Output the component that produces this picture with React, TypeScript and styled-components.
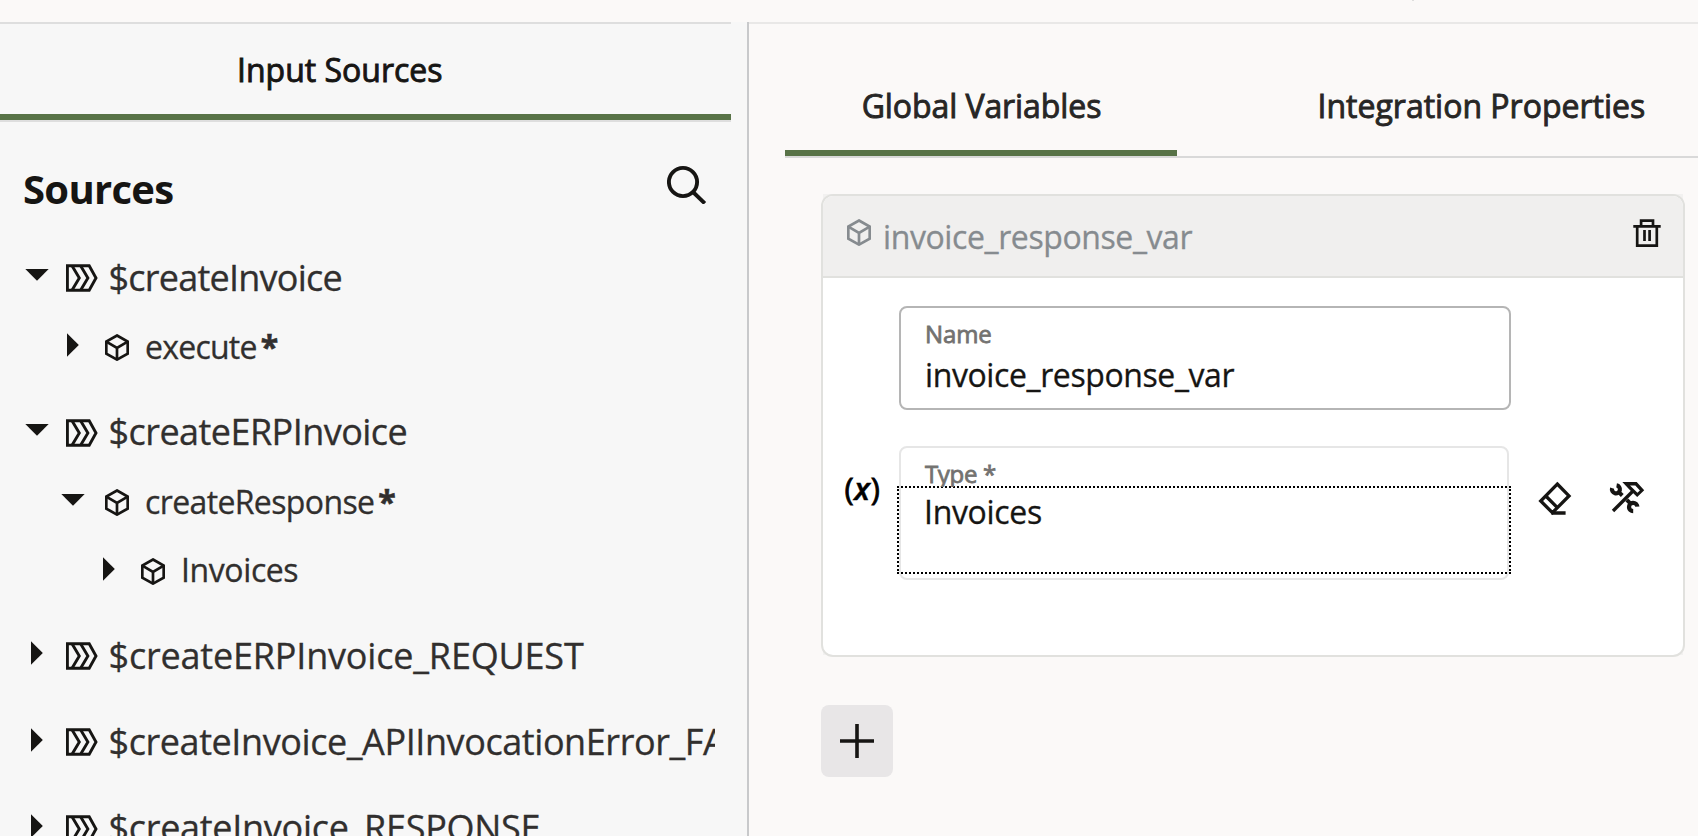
import React from "react";
import styled, { createGlobalStyle } from "styled-components";

const GlobalStyle = createGlobalStyle`
  *, *::before, *::after { box-sizing: border-box; }
  html, body { margin: 0; padding: 0; }
  body {
    background: #fbf9f8;
    color: #161513;
    font-family: "Open Sans", "Noto Sans", sans-serif;
    overflow: hidden;
  }
  svg { display: block; flex: none; }
`;

const Page = styled.div`
  display: flex;
  flex-direction: column;
  width: 100vw;
  height: 836px;
  overflow: hidden;
`;

const TopStrip = styled.div`
  flex: none;
  height: 22px;
  padding-left: 1412px;
`;

const TopTick = styled.div`
  width: 2px;
  height: 1px;
  background: #dededd;
`;

const Workspace = styled.main`
  flex: 1;
  display: flex;
  min-height: 0;
`;

const SourcesPanel = styled.aside`
  flex: none;
  width: 749px;
  padding-right: 16px;
  background: #f7f7f7;
  border-right: 2px solid #c8c9cb;
  overflow: hidden;
`;

const SourcesTabBar = styled.div`
  height: 100px;
  border-top: 2px solid #dedede;
  border-bottom: 2px solid #dedede;
`;

const TabText = styled.span<{ $tone?: string; $spacing?: number }>`
  font-size: 32px;
  line-height: 92px;
  white-space: nowrap;
  color: ${(p) => p.$tone ?? "#161513"};
  -webkit-text-stroke: 0.9px ${(p) => p.$tone ?? "#161513"};
  letter-spacing: ${(p) => p.$spacing ?? 0}px;
`;

const SourcesTab = styled.div`
  height: 96px;
  padding-left: 237px;
  border-bottom: 6px solid #587347;
  overflow: hidden;
`;

const SourcesHeader = styled.div`
  display: flex;
  justify-content: space-between;
  align-items: flex-start;
  height: 120px;
  padding: 38px 24px 0 23px;
`;

const SourcesTitle = styled.h2`
  margin: 0;
  font-size: 40px;
  line-height: 57px;
  font-weight: 700;
  letter-spacing: -0.7px;
`;

const SearchIconBox = styled.div`
  padding-top: 4px;
`;

const Tree = styled.div`
  width: 715px;
  overflow: hidden;
`;

const TreeGroup = styled.div`
  margin-bottom: 16.3px;
`;

const TreeRow = styled.div<{ $level: number }>`
  display: flex;
  align-items: center;
  height: ${(p) => (p.$level === 0 ? 70 : 68.5)}px;
  padding-left: ${(p) => 25 + p.$level * 36}px;
`;

const Caret = styled.span<{ $root: boolean }>`
  flex: none;
  display: flex;
  justify-content: center;
  width: 24px;
  margin-right: ${(p) => (p.$root ? 17 : 20)}px;
  padding-bottom: ${(p) => (p.$root ? 3.5 : 2)}px;
`;

const NodeIcon = styled.span<{ $root: boolean }>`
  flex: none;
  margin-right: ${(p) => (p.$root ? 10.5 : 16)}px;
  padding-top: ${(p) => (p.$root ? 2 : 3)}px;
`;

const NodeLabel = styled.span<{ $root: boolean; $spacing: number }>`
  padding-top: 1px;
  font-size: ${(p) => (p.$root ? 36 : 32)}px;
  line-height: 60px;
  letter-spacing: ${(p) => p.$spacing}px;
  color: #312f2e;
  -webkit-text-stroke: 0.3px #312f2e;
  white-space: nowrap;
`;

const Required = styled.span`
  margin-left: 4px;
  padding-top: 1px;
  font-size: 32px;
  line-height: 60px;
  font-weight: 700;
  color: #312f2e;
  -webkit-text-stroke: 0.6px #312f2e;
`;

const MappingPanel = styled.section`
  flex: 1;
  min-width: 0;
  border-top: 2px solid #e9e8e7;
  overflow: hidden;
`;

const TabList = styled.div`
  display: flex;
  height: 134px;
  margin-left: 36px;
  padding-top: 36px;
  border-bottom: 2px solid #d9d9d9;
`;

const Tab = styled.div<{ $active?: boolean }>`
  flex: none;
  width: ${(p) => (p.$active ? "392px" : "521px")};
  padding-left: ${(p) => (p.$active ? 1 : 140.5)}px;
  text-align: ${(p) => (p.$active ? "center" : "left")};
  border-bottom: 6px solid ${(p) => (p.$active ? "#587347" : "transparent")};
  overflow: hidden;
`;

const Content = styled.div`
  padding: 36px 0 0 72px;
`;

const CardBacking = styled.div`
  width: 864px;
  height: 463px;
  padding: 0 2px 2px;
  background: linear-gradient(#f2f1f0, #f2f1f0) content-box;
`;

const Card = styled.div`
  width: 864px;
  height: 463px;
  margin-left: -2px;
  background: #fff;
  border: 2px solid #e1e1de;
  border-radius: 12px;
  overflow: hidden;
`;

const CardHeader = styled.header`
  display: flex;
  align-items: flex-start;
  height: 82px;
  padding: 23px 22px 0 24px;
  background: #f0efee;
  border-bottom: 2px solid #e1e1de;
  color: #868b8f;
`;

const CardTitle = styled.span`
  flex: 1;
  margin: -6px 0 0 12px;
  font-size: 32px;
  line-height: 48px;
  letter-spacing: -0.4px;
  -webkit-text-stroke: 0.3px #868b8f;
`;

const CardBody = styled.div`
  display: grid;
  grid-template-columns: 76px 612px auto;
  row-gap: 36px;
  padding-top: 28px;
`;

const Field = styled.div<{ $readonly?: boolean }>`
  grid-column: 2;
  width: ${(p) => (p.$readonly ? 610 : 612)}px;
  height: ${(p) => (p.$readonly ? 134 : 104)}px;
  border: 2px solid ${(p) => (p.$readonly ? "#e6e6e6" : "#b5b5b5")};
  border-radius: 8px;
  background: ${(p) => (p.$readonly ? "transparent" : "#fff")};
`;

const FieldLabel = styled.div<{ $spacing: number }>`
  height: 39px;
  padding: 9px 0 0 24px;
  font-size: 24px;
  line-height: 34px;
  letter-spacing: ${(p) => p.$spacing}px;
  color: #737270;
  -webkit-text-stroke: 0.8px #737270;
  overflow: hidden;
`;

const FieldValue = styled.div`
  padding-left: 24px;
  font-size: 32px;
  line-height: 56px;
  letter-spacing: -0.4px;
  color: #161513;
  -webkit-text-stroke: 0.3px #161513;
`;

const FocusedValue = styled.div`
  width: 614px;
  height: 88px;
  margin: -1px 0 0 -4px;
  padding-left: 25px;
  border: 2px dotted #000;
  font-size: 32px;
  line-height: 47px;
  letter-spacing: -0.31px;
  color: #161513;
  -webkit-text-stroke: 0.3px #161513;
`;

const VariableMark = styled.div`
  grid-column: 1;
  padding: 19px 0 0 21.5px;
  font-size: 31px;
  line-height: 46px;
  letter-spacing: 0.7px;
  color: #000;
  -webkit-text-stroke: 0.8px #000;
  white-space: nowrap;

  em {
    font-weight: 600;
    -webkit-text-stroke: 0.5px #000;
  }
`;

const FieldActions = styled.div`
  grid-column: 3;
  display: flex;
  gap: 37px;
  padding: 35px 0 0 27px;
`;

const AddButton = styled.button`
  display: flex;
  align-items: center;
  justify-content: center;
  width: 72px;
  height: 72px;
  margin-top: 48px;
  padding: 0;
  border: 0;
  border-radius: 8px;
  background: #e8e6e7;
`;

const ink = "#161513";

const SearchIcon = () => (
  <svg width="40" height="40" viewBox="0 0 40 40" fill="none" stroke={ink} strokeWidth="3.9">
    <circle cx="16" cy="18" r="14.1" />
    <path d="M26 28 L37.8 39.4" />
  </svg>
);

const CaretDown = () => (
  <svg width="24" height="12" viewBox="0 0 24 12">
    <path d="M0.3 0 H23.7 L12 11.8 Z" fill={ink} />
  </svg>
);

const CaretRight = () => (
  <svg width="12" height="24" viewBox="0 0 12 24">
    <path d="M0 0.3 V23.7 L11.8 12 Z" fill={ink} />
  </svg>
);

const MessageIcon = () => (
  <svg width="32" height="28" viewBox="0 0 32 28" fill="none" stroke={ink} strokeWidth="2.9">
    <path d="M1.4 1.7 H23.2 L30 14 L23.2 26.3 H1.4 Z" />
    <path d="M6 1.7 L13.3 14 L6 26.3 M14.6 1.7 L21.9 14 L14.6 26.3" />
  </svg>
);

const CubeIcon = ({ color = ink }: { color?: string }) => (
  <svg width="24" height="27" viewBox="0 0 24 27" fill="none" stroke={color} strokeWidth="2.7">
    <path d="M12 1.5 L22.7 7.6 V19.6 L12 25.6 L1.3 19.6 V7.6 Z" />
    <path d="M1.3 7.6 L12 13.9 L22.7 7.6 M12 13.9 V25.6" />
  </svg>
);

const TrashIcon = () => (
  <svg width="28" height="28" viewBox="0 0 28 28" fill="none" stroke={ink} strokeWidth="2.7">
    <path d="M0.3 7.4 H27.7 M8.1 7 V1.6 H20 V7 M4.2 7.4 V26.6 H23.8 V7.4 M11.5 11 V22 M16.6 11 V22" />
  </svg>
);

const EraserIcon = () => (
  <svg width="34" height="35" viewBox="0 0 34 35" fill="none" stroke={ink} strokeWidth="3.3">
    <path d="M19.3 3 L31 14.9 L14.4 31.7 L2.7 20 Z" />
    <path d="M7.8 15 L19.6 26.8 M13.4 32 H27.6" />
  </svg>
);

const ToolsIcon = () => (
  <svg width="36" height="35" viewBox="0 0 36 35" fill="none" stroke={ink}>
    <path d="M4 30 L23.5 10.5" strokeWidth="3.4" />
    <path
      d="M13.3 1 H27.7 L35.2 9.3 L28.2 16 L20.6 8.7 Z M21 4.6 L28.4 11.7 L30.9 9.4 L26.3 4.6 Z"
      fill={ink}
      fillRule="evenodd"
      stroke="none"
    />
    <path d="M3.1 7.2 A4 4 0 1 0 7.6 4.4" strokeWidth="4.2" />
    <path d="M10.3 11.6 L13.3 14.5" strokeWidth="4" />
    <path d="M28.4 25.6 A4.2 4.2 0 1 0 24.2 30.2" strokeWidth="4.2" />
    <path d="M17.8 18.8 L21.6 22.6" strokeWidth="4" />
  </svg>
);

const PlusIcon = () => (
  <svg width="34" height="34" viewBox="0 0 34 34" stroke={ink} strokeWidth="3.6">
    <path d="M17 0 V34 M0 17 H34" />
  </svg>
);

type NodeData = {
  label: string;
  level: number;
  open?: boolean;
  required?: boolean;
  spacing: number;
};

const groups: NodeData[][] = [
  [
    { label: "$createInvoice", level: 0, open: true, spacing: -0.76 },
    { label: "execute", level: 1, required: true, spacing: -0.76 },
  ],
  [
    { label: "$createERPInvoice", level: 0, open: true, spacing: -0.55 },
    { label: "createResponse", level: 1, open: true, required: true, spacing: -0.63 },
    { label: "Invoices", level: 2, spacing: -0.4 },
  ],
  [{ label: "$createERPInvoice_REQUEST", level: 0, spacing: -0.19 }],
  [{ label: "$createInvoice_APIInvocationError_FAULT", level: 0, spacing: -0.42 }],
  [{ label: "$createInvoice_RESPONSE", level: 0, spacing: -0.29 }],
];

const TreeNode = ({ node }: { node: NodeData }) => {
  const root = node.level === 0;
  return (
    <TreeRow $level={node.level}>
      <Caret $root={root}>{node.open ? <CaretDown /> : <CaretRight />}</Caret>
      <NodeIcon $root={root}>{root ? <MessageIcon /> : <CubeIcon />}</NodeIcon>
      <NodeLabel $root={root} $spacing={node.spacing}>
        {node.label}
      </NodeLabel>
      {node.required && <Required>*</Required>}
    </TreeRow>
  );
};

export default function App() {
  return (
    <>
      <GlobalStyle />
      <Page>
        <TopStrip>
          <TopTick />
        </TopStrip>
        <Workspace>
          <SourcesPanel>
            <SourcesTabBar>
              <SourcesTab>
                <TabText>Input Sources</TabText>
              </SourcesTab>
            </SourcesTabBar>
            <SourcesHeader>
              <SourcesTitle>Sources</SourcesTitle>
              <SearchIconBox>
                <SearchIcon />
              </SearchIconBox>
            </SourcesHeader>
            <Tree>
              {groups.map((nodes) => (
                <TreeGroup key={nodes[0].label}>
                  {nodes.map((node) => (
                    <TreeNode key={node.label} node={node} />
                  ))}
                </TreeGroup>
              ))}
            </Tree>
          </SourcesPanel>
          <MappingPanel>
            <TabList>
              <Tab $active>
                <TabText $tone="#272625" $spacing={-0.08}>
                  Global Variables
                </TabText>
              </Tab>
              <Tab>
                <TabText $tone="#272625">Integration Properties</TabText>
              </Tab>
            </TabList>
            <Content>
              <CardBacking>
                <Card>
                  <CardHeader>
                    <CubeIcon color="#868b8f" />
                    <CardTitle>invoice_response_var</CardTitle>
                    <TrashIcon />
                  </CardHeader>
                  <CardBody>
                    <Field>
                      <FieldLabel $spacing={-0.1}>Name</FieldLabel>
                      <FieldValue>invoice_response_var</FieldValue>
                    </Field>
                    <VariableMark>
                      (<em>x</em>)
                    </VariableMark>
                    <Field $readonly>
                      <FieldLabel $spacing={-0.35}>Type *</FieldLabel>
                      <FocusedValue>Invoices</FocusedValue>
                    </Field>
                    <FieldActions>
                      <EraserIcon />
                      <ToolsIcon />
                    </FieldActions>
                  </CardBody>
                </Card>
              </CardBacking>
              <AddButton aria-label="Add variable">
                <PlusIcon />
              </AddButton>
            </Content>
          </MappingPanel>
        </Workspace>
      </Page>
    </>
  );
}
